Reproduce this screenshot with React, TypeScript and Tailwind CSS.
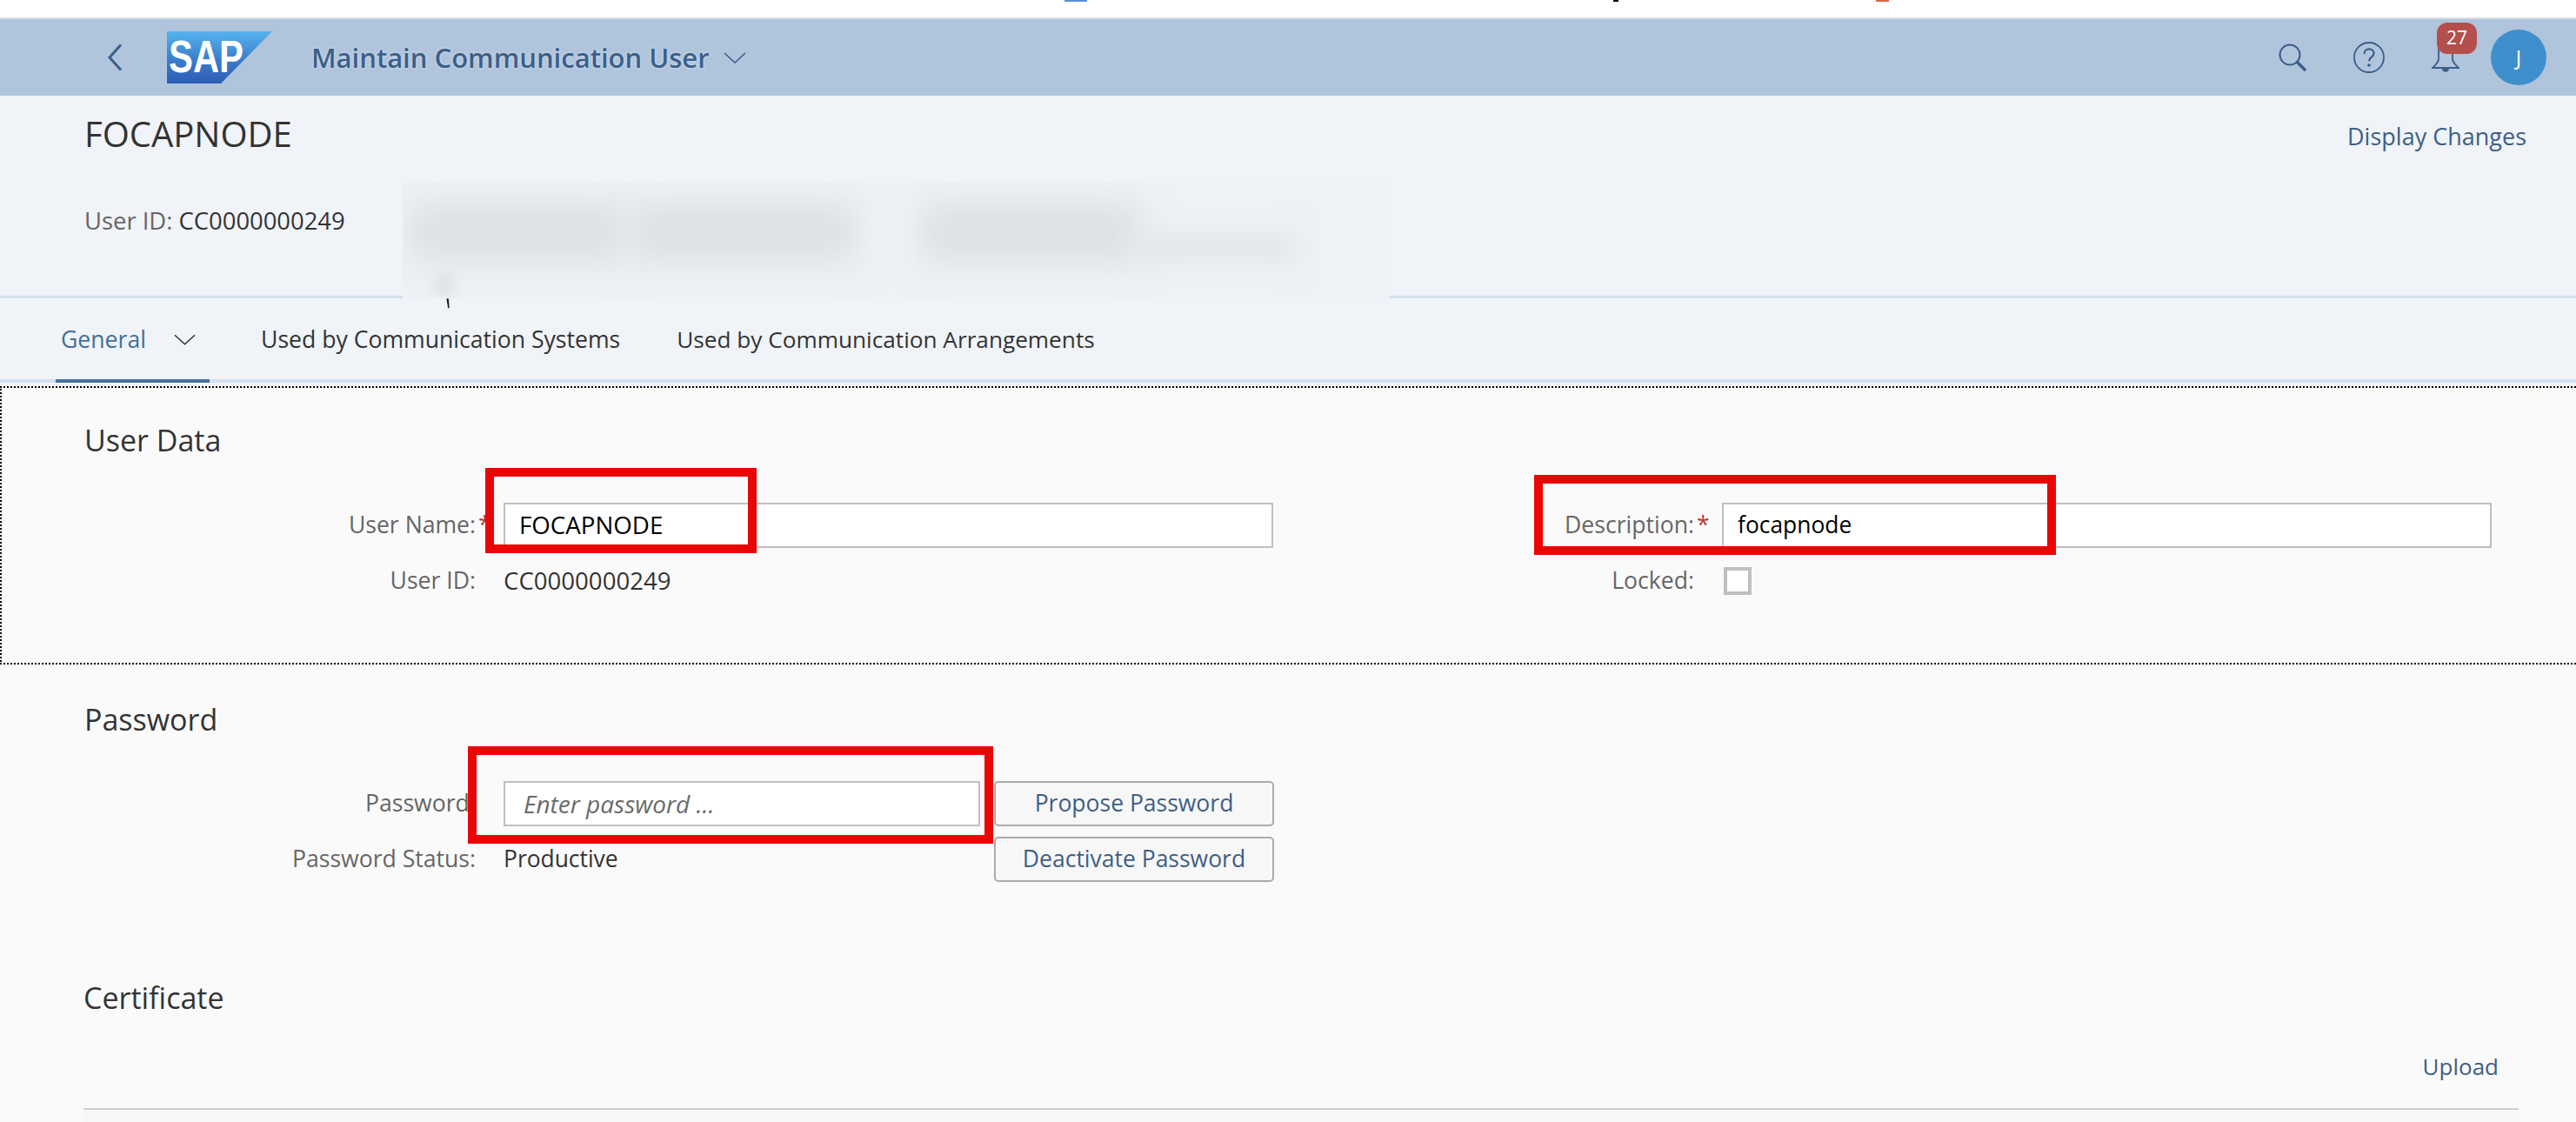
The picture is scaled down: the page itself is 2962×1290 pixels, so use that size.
// App.tsx
const font = "font-['Open_Sans',sans-serif]";
const glow = "[text-shadow:0_0_3px_#dfe8f2]";

function Chevron({ className }: { className: string }) {
  return (
    <svg viewBox="0 0 26 13" className={className} fill="none" stroke="currentColor" strokeWidth="1.6">
      <path d="M1 1l12 11L25 1" />
    </svg>
  );
}

function SapLogo() {
  return (
    <svg viewBox="0 0 121 60" className="h-[60px] w-[121px]">
      <defs>
        <linearGradient id="sapFill" x1="0" y1="0" x2="0" y2="1">
          <stop offset="0" stopColor="#56b4ee" />
          <stop offset="0.55" stopColor="#3a7dcb" />
          <stop offset="1" stopColor="#2e5bb4" />
        </linearGradient>
      </defs>
      <polygon points="0,0 121,0 62,60 0,60" fill="url(#sapFill)" />
      <text x="2" y="47" fill="#fff" fontFamily="'Liberation Sans', sans-serif" fontWeight="700" fontSize="52" textLength="86" lengthAdjust="spacingAndGlyphs">
        SAP
      </text>
    </svg>
  );
}

function Required() {
  return <span className="text-[#bb3a3a]">*</span>;
}

function Label({ children, star }: { children: string; star?: boolean }) {
  return (
    <div className="relative self-center text-right text-[26.6px] text-[#666666]">
      {children}
      {star && <span className="absolute left-full top-0 ml-[3px]"><Required /></span>}
    </div>
  );
}

function Field({ value, size }: { value: string; size: string }) {
  return (
    <div className={`flex h-[52px] items-center border-2 border-[#bfbfbf] bg-white pl-4 text-black ${size}`}>
      {value}
    </div>
  );
}

function Heading({ children }: { children: string }) {
  return <h2 className="text-[34px] leading-10 text-[#333333]">{children}</h2>;
}

function SapButton({ children }: { children: string }) {
  return (
    <button className="h-[52px] rounded-[5px] border-2 border-[#ababab] bg-[#f7f7f7] text-[26.5px] text-[#3f5e85]">
      {children}
    </button>
  );
}

// red marks drawn over the screenshot
function Mark({ className }: { className: string }) {
  return <div className={`pointer-events-none absolute border-[10px] border-[#eb0606] ${className}`} />;
}

export default function App() {
  return (
    <div className={`relative h-[1290px] w-[2962px] overflow-hidden bg-[#fafafa] ${font}`}>
      {/* top strip */}
      <div className="relative h-5 bg-white">
        <div className="absolute left-[1224px] top-0 h-[2px] w-[26px] bg-[#5a8fd8]" />
        <div className="absolute left-[1855px] top-0 h-[2px] w-[6px] bg-black" />
        <div className="absolute left-[2157px] top-0 h-[2px] w-[15px] bg-[#d9664a]" />
      </div>

      {/* shell header */}
      <header className="flex h-[90px] items-center border-t-2 border-[#dcdfe0] bg-[#b0c4dc] text-[#3a5f8a]">
        <svg viewBox="0 0 18 32" className="ml-[123px] h-8 w-[18px]" fill="none" stroke="currentColor" strokeWidth="3">
          <path d="M16 1.5L3 16l13 14.5" />
        </svg>
        <div className="ml-[51px]">
          <SapLogo />
        </div>
        <div className={`ml-[45px] w-[474px] whitespace-nowrap text-[31px] font-semibold ${glow}`}>Maintain Communication User</div>
        <Chevron className="h-[13px] w-[26px]" />

        <div className="ml-auto mr-[34px] flex items-center">
          <svg viewBox="0 0 32 32" className="h-8 w-8" fill="none" stroke="currentColor" strokeWidth="2">
            <circle cx="13" cy="13" r="11.5" />
            <path d="M21.5 21.5L30 30" strokeWidth="3.4" strokeLinecap="round" />
          </svg>
          <svg viewBox="0 0 36 36" className="ml-[54px] h-9 w-9" fill="none" stroke="currentColor" strokeWidth="1.8">
            <circle cx="18" cy="18" r="17" />
            <path d="M12.5 14c0-3.4 2.5-5.6 5.6-5.6s5.5 2 5.5 4.9c0 4.4-5.6 4.4-5.6 9" strokeWidth="2.2" />
            <circle cx="18" cy="27" r="1.8" fill="currentColor" stroke="none" />
          </svg>
          <div className="relative ml-[54px] h-9 w-8">
            <svg viewBox="0 0 32 36" className="h-9 w-8" fill="none" stroke="currentColor" strokeWidth="1.8">
              <path d="M8 8v11c0 5-3 7-7 11h30c-4-4-7-6-7-11V8" />
              <path d="M12 31c0 5 8 5 8 0z" fill="currentColor" stroke="none" />
            </svg>
            <div className="absolute left-[6px] top-[-22px] flex h-9 w-[46px] items-center justify-center rounded-xl bg-[#b44f4c] text-[21px] text-white">
              27
            </div>
          </div>
          <div className="ml-9 flex h-16 w-16 items-center justify-center rounded-full bg-[#3f8fcc] text-[24px] text-white">J</div>
        </div>
      </header>

      {/* object header */}
      <section className="relative h-[233px] border-b-[3px] border-[#d5e1f0] bg-[#f0f3f8] pl-[97px] pt-[18px]">
        <div className="flex items-start justify-between pr-[57px]">
          <h1 className="text-[40px] leading-[52px] text-[#333333]">FOCAPNODE</h1>
          <a className="mt-[3px] text-[27px] leading-[52px] text-[#3f5e85]">Display Changes</a>
        </div>
        <div className="mt-[53px] text-[27.4px] leading-9 text-[#666666]">
          User ID: <span className="text-[#333333]">CC0000000249</span>
        </div>

        {/* blurred out attributes */}
        <div className="absolute bottom-[-3px] left-[463px] top-[100px] w-[1135px] overflow-hidden bg-[#eef2f6]">
          <div className="absolute left-[6px] top-[22px] h-[70px] w-[250px] bg-[#dde1e5] blur-[18px]" />
          <div className="absolute left-[262px] top-[22px] h-[70px] w-[260px] bg-[#dde1e5] blur-[18px]" />
          <div className="absolute left-[596px] top-[22px] h-[70px] w-[250px] bg-[#dde1e5] blur-[18px]" />
          <div className="absolute left-[840px] top-[58px] h-[34px] w-[190px] bg-[#e3e7ea] blur-[14px]" />
          <div className="absolute left-[38px] top-[106px] h-[24px] w-[20px] bg-[#dde1e5] blur-[7px]" />
        </div>
        <svg viewBox="0 0 8 12" className="absolute left-[510px] top-[233px] h-3 w-2">
          <path d="M3 0l3 0 1 11-2 1z" fill="#111" stroke="#fff" strokeWidth="0.6" />
        </svg>
      </section>

      {/* tabs */}
      <nav className="flex h-[97px] items-stretch border-b-4 border-[#d5e1f0] bg-[#f0f3f8] pl-16 text-[26.6px] text-[#333333]">
        <div className="-mb-1 flex w-[177px] items-center border-b-4 border-[#466f9c] pl-[6px] pt-[2px] text-[#427099]">
          General
          <Chevron className="ml-[32px] h-[13px] w-[25px] text-[#333333]" />
        </div>
        <div className="ml-[59px] flex items-center pt-[2px]">Used by Communication Systems</div>
        <div className="ml-[65px] flex items-center pt-[2px] text-[26.2px]">Used by Communication Arrangements</div>
      </nav>
      <div className="h-1 bg-[#f1f5fb]" />

      {/* user data */}
      <section className="h-[320px] border-y-2 border-l-2 border-dotted border-black pt-10">
        <div className="pl-[95px]">
          <Heading>User Data</Heading>
        </div>
        <div className="mt-[52px] grid grid-cols-[545px_32px_885px_484px_32px_885px] gap-y-3">
          <Label star>User Name:</Label>
          <div />
          <Field value="FOCAPNODE" size="text-[27.7px]" />
          <Label star>Description:</Label>
          <div />
          <Field value="focapnode" size="text-[26.4px]" />
          <Label>User ID:</Label>
          <div />
          <div className="flex h-[52px] items-center text-[27.6px] text-[#333333]">CC0000000249</div>
          <Label>Locked:</Label>
          <div />
          <div className="flex h-[52px] items-center">
            <div className="ml-[2px] h-8 w-8 border-4 border-[#bfbfbf] bg-white" />
          </div>
        </div>
      </section>

      {/* password */}
      <section className="pt-[43px]">
        <div className="pl-[97px]">
          <Heading>Password</Heading>
        </div>
        <div className="mt-[51px] grid grid-cols-[547px_32px_548px_16px_322px] gap-y-3">
          <div className="self-center pl-[420px] text-[26.6px] text-[#666666]">Password</div>
          <div />
          <div className="flex h-[52px] items-center border-2 border-[#bfbfbf] bg-white pl-[21px] text-[28px] italic text-[#6a6a6a]">
            Enter password ...
          </div>
          <div />
          <SapButton>Propose Password</SapButton>
          <Label>Password Status:</Label>
          <div />
          <div className="flex h-[52px] items-center text-[26.4px] text-[#333333]">Productive</div>
          <div />
          <SapButton>Deactivate Password</SapButton>
        </div>
      </section>

      {/* certificate */}
      <section className="mt-[113px] pl-24 pr-[66px]">
        <Heading>Certificate</Heading>
        <div className="mt-[39px] pr-[23px] text-right text-[26px] leading-10 text-[#3f5e85]">Upload</div>
        <div className="mt-[28px] h-[30px] border-t-2 border-[#cccccc] bg-[#f7f7f7]" />
      </section>

      {/* red annotation boxes */}
      <Mark className="left-[558px] top-[538px] h-[98px] w-[312px]" />
      <Mark className="left-[1764px] top-[546px] h-[92px] w-[600px]" />
      <Mark className="left-[538px] top-[858px] h-[112px] w-[604px]" />
    </div>
  );
}
